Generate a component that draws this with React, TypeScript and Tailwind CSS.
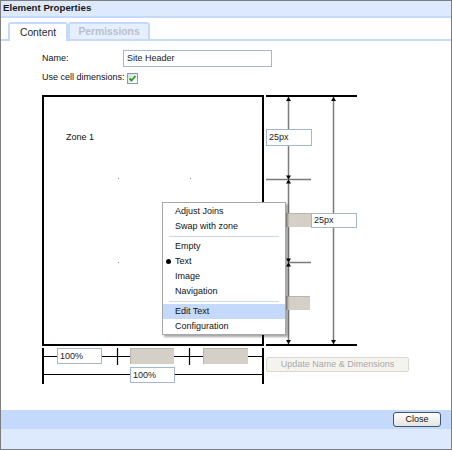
import React from "react";

const font = { fontFamily: '"Liberation Sans", Arial, sans-serif' };

function TextBox({ value, className }: { value: string; className: string }) {
  return (
    <div
      className={`absolute flex items-center border border-[#a3b6cd] bg-white pl-[2px] text-[9px] leading-none text-[#222] ${className}`}
    >
      {value}
    </div>
  );
}

function GrayBox({ className }: { className: string }) {
  return (
    <div
      className={`absolute border-l border-t border-[#b9b5ad] bg-[#d4d0c8] ${className}`}
    />
  );
}

const menuItems: (string | null)[] = [
  "Adjust Joins",
  "Swap with zone",
  null,
  "Empty",
  "Text",
  "Image",
  "Navigation",
  null,
  "Edit Text",
  "Configuration",
];

function ContextMenu() {
  return (
    <div className="absolute left-[122px] top-[109px] w-[124px] border border-[#a8a8a8] bg-white pt-[1px] shadow-[2px_2px_2px_rgba(0,0,0,0.35)]">
      {menuItems.map((item, i) =>
        item === null ? (
          <div key={i} className="flex h-[5px] items-center px-[6px]">
            <div className="h-px w-full bg-[#c9d8ee]" />
          </div>
        ) : (
          <div
            key={i}
            className={
              "relative flex h-[15px] items-center pl-[12px] text-[9px] text-[#111] " +
              (item === "Edit Text" ? "bg-[#c5d9fb]" : "")
            }
          >
            {item === "Text" && (
              <span className="absolute left-[3px] top-[5px] h-[5px] w-[5px] rounded-full bg-black" />
            )}
            {item}
          </div>
        )
      )}
    </div>
  );
}

function Arrow({ x, y, dir }: { x: number; y: number; dir: "up" | "down" }) {
  const d = dir === "up" ? 4 : -4;
  return <polygon points={`${x},${y} ${x - 2.5},${y + d} ${x + 2.5},${y + d}`} fill="#000" />;
}

function Hourglass({ x, y }: { x: number; y: number }) {
  return (
    <g fill="#000">
      <polygon points={`${x - 2.5},${y - 4} ${x + 2.5},${y - 4} ${x},${y}`} />
      <polygon points={`${x - 2.5},${y + 4} ${x + 2.5},${y + 4} ${x},${y}`} />
    </g>
  );
}

function Diagram() {
  return (
    <div className="relative ml-[39px] mt-[9px] h-[293px] w-[372px]">
      <svg className="absolute left-0 top-0" width="372" height="293">
        <g transform="translate(-40 -93)">
          {/* zone box */}
          <rect x="43" y="96" width="220" height="249" fill="none" stroke="#000" strokeWidth="2" />
          {/* right dimension lines */}
          <line x1="266" y1="96" x2="357" y2="96" stroke="#000" strokeWidth="2" />
          <line x1="266" y1="345" x2="357" y2="345" stroke="#000" strokeWidth="2" />
          <line x1="288.5" y1="97" x2="288.5" y2="344" stroke="#7a7a7a" strokeWidth="1.5" />
          <line x1="333.5" y1="97" x2="333.5" y2="344" stroke="#7a7a7a" strokeWidth="1.5" />
          <line x1="266" y1="179.5" x2="311" y2="179.5" stroke="#7a7a7a" strokeWidth="1.5" />
          <line x1="288" y1="262.5" x2="311" y2="262.5" stroke="#7a7a7a" strokeWidth="1.5" />
          <Arrow x={288.5} y={97} dir="up" />
          <Arrow x={333.5} y={97} dir="up" />
          <Arrow x={288.5} y={344} dir="down" />
          <Arrow x={333.5} y={344} dir="down" />
          <Hourglass x={288.5} y={179.5} />
          <Hourglass x={288.5} y={262.5} />
          {/* bottom dimension lines */}
          <line x1="43" y1="356.5" x2="263" y2="356.5" stroke="#000" strokeWidth="1.2" />
          <line x1="43" y1="374.5" x2="263" y2="374.5" stroke="#000" strokeWidth="1.2" />
          <line x1="43" y1="348" x2="43" y2="384" stroke="#000" strokeWidth="2" />
          <line x1="263" y1="348" x2="263" y2="384" stroke="#000" strokeWidth="2" />
          <line x1="117.5" y1="348" x2="117.5" y2="365" stroke="#000" strokeWidth="1.2" />
          <line x1="189.5" y1="348" x2="189.5" y2="365" stroke="#000" strokeWidth="1.2" />
          {/* split markers */}
          <rect x="118" y="178" width="1" height="1" fill="#8a8a8a" />
          <rect x="190" y="178" width="1" height="1" fill="#8a8a8a" />
          <rect x="118" y="262" width="1" height="1" fill="#8a8a8a" />
        </g>
      </svg>

      <div className="absolute left-[26px] top-[39px] text-[9px] leading-[11px] text-[#111]">Zone 1</div>

      <TextBox value="25px" className="left-[226px] top-[36px] h-[17px] w-[46px]" />
      <GrayBox className="left-[246px] top-[120px] h-[14px] w-[25px]" />
      <TextBox value="25px" className="left-[271px] top-[120px] h-[15px] w-[46px]" />
      <GrayBox className="left-[246px] top-[203px] h-[14px] w-[24px]" />

      <TextBox value="100%" className="left-[17px] top-[255px] h-[16px] w-[45px]" />
      <GrayBox className="left-[90px] top-[255px] h-[16px] w-[44px]" />
      <GrayBox className="left-[163px] top-[255px] h-[16px] w-[45px]" />
      <TextBox value="100%" className="left-[90px] top-[274px] h-[16px] w-[45px]" />

      <button
        disabled
        className="absolute left-[226px] top-[264px] flex h-[15px] w-[143px] items-center justify-center rounded-[2px] border border-[#dad8ce] bg-[#f4f3ee] text-[9px] text-[#a9a9a9]"
      >
        Update Name &amp; Dimensions
      </button>

      <ContextMenu />
    </div>
  );
}

export default function App() {
  return (
    <div
      className="flex h-[450px] w-[452px] flex-col border border-[#7d7d7d] bg-white text-[#111]"
      style={font}
    >
      {/* title bar */}
      <div className="flex h-[17px] items-center border-b-2 border-[#c5d9fb] bg-[#dde9fd] pl-[2px] text-[9.7px] font-bold text-[#1a1a1a]">
        Element Properties
      </div>

      {/* tabs */}
      <div className="flex h-[23px] items-end border-b-2 border-[#c5d9fb] pl-[7px]">
        <div className="-mb-[2px] flex h-[19px] w-[60px] items-center justify-center rounded-t-[3px] border-2 border-b-0 border-[#c5d9fb] bg-white text-[10.3px] text-[#2a2a2a]">
          Content
        </div>
        <div className="flex h-[17px] w-[82px] items-center justify-center rounded-t-[3px] border-2 border-b-0 border-[#c5d9fb] bg-[#e6effd] text-[10.3px] font-bold text-[#b8c0cf]">
          Permissions
        </div>
      </div>

      {/* content */}
      <div className="flex-1 pt-[9px]">
        <div className="flex h-[17px] items-center pl-[41px]">
          <span className="w-[81px] text-[9px]">Name:</span>
          <div className="flex h-[17px] w-[149px] items-center border border-[#a3b6cd] pl-[3px] text-[9px] text-[#222]">
            Site Header
          </div>
        </div>
        <div className="mt-[5px] flex h-[12px] items-center pl-[41px]">
          <span className="w-[85px] text-[9px]">Use cell dimensions:</span>
          <span className="flex h-[11px] w-[11px] items-center justify-center border border-[#7f9db9] bg-gradient-to-br from-[#dcdcd6] to-white">
            <svg width="9" height="9" viewBox="0 0 9 9">
              <path d="M1.5 4.5 L3.5 6.5 L7.5 2" fill="none" stroke="#21a121" strokeWidth="1.8" />
            </svg>
          </span>
        </div>
        <Diagram />
      </div>

      {/* footer */}
      <div className="flex h-[39px] flex-col">
        <div className="flex h-[19px] items-center justify-end bg-[#c5d9fb] pr-[10px]">
          <button className="flex h-[15px] w-[48px] items-center justify-center rounded-[3px] border border-[#3d5675] bg-gradient-to-b from-white to-[#e4e4e0] text-[9px] text-[#111]">
            Close
          </button>
        </div>
        <div className="flex-1 bg-[#dde9fd]" />
      </div>
    </div>
  );
}
